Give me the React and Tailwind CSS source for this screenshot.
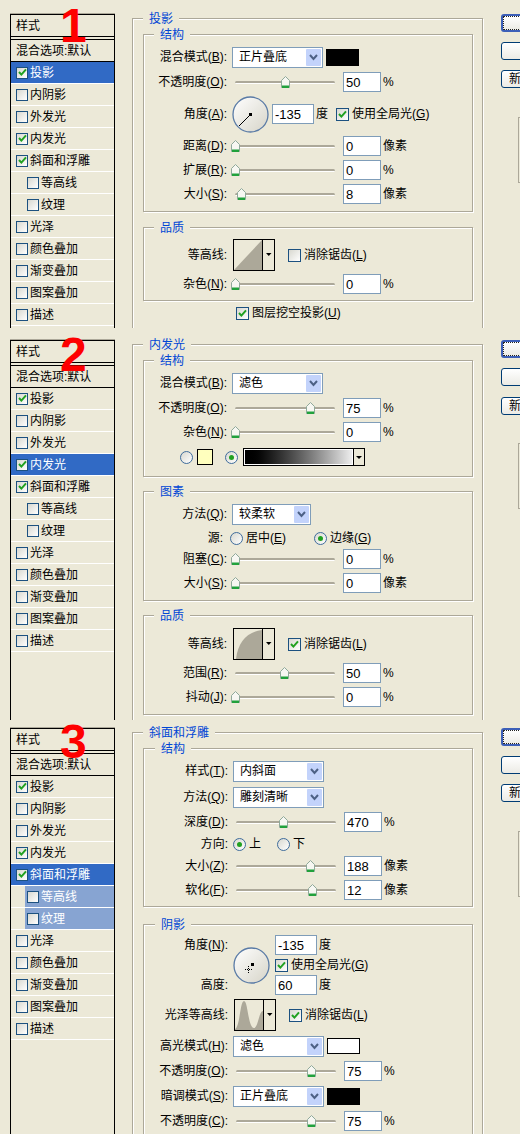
import React from "react";

const FONT = "font-['Liberation_Sans','Noto_Sans_CJK_SC',sans-serif]";

function Check({ on, s = "h-[13px] w-[13px]" }) {
  return (
    <span className={`flex ${s} shrink-0 items-center justify-center border border-[#1c5180] bg-gradient-to-br from-[#d8d8d0] to-white`}>
      {on && (
        <svg width="9" height="9" viewBox="0 0 9 9">
          <path d="M1 4 L3.4 6.6 L8 1.4" fill="none" stroke="#21a121" strokeWidth="2" />
        </svg>
      )}
    </span>
  );
}

function Radio({ on }) {
  return (
    <span className="flex h-[13px] w-[13px] shrink-0 items-center justify-center rounded-full border border-[#3f6c9c] bg-gradient-to-br from-[#d8d8d0] to-white">
      {on && <span className="h-[5px] w-[5px] rounded-full bg-[#21a121]" />}
    </span>
  );
}

function L({ t, k }) {
  if (!k) return <>{t}</>;
  return (
    <>
      {t}(<u>{k}</u>)
    </>
  );
}

function Label({ t, k, w = "w-[83px]" }) {
  return (
    <span className={`${w} shrink-0 whitespace-nowrap text-right`}>
      <L t={t} k={k} />:
    </span>
  );
}

function Input({ v, w = "w-[38px]" }) {
  return (
    <span className={`${w} flex h-[20px] shrink-0 items-center border border-[#7f9db9] bg-white pl-[2px] text-[13px]`}>
      {v}
    </span>
  );
}

function Select({ v, w = "w-[91px]" }) {
  return (
    <span className={`${w} ml-[5px] flex h-[21px] shrink-0 items-center justify-between border border-[#7f9db9] bg-white p-px pl-[6px]`}>
      <span className="whitespace-nowrap">{v}</span>
      <span className="flex h-full w-[15px] items-center justify-center rounded-[1px] bg-[#c3d3fb]">
        <svg width="9" height="7" viewBox="0 0 9 7">
          <path d="M1 1 L4.5 5 L8 1" fill="none" stroke="#4d6185" strokeWidth="2" />
        </svg>
      </span>
    </span>
  );
}

function Thumb() {
  return (
    <svg width="9" height="12" viewBox="0 0 9 12" className="block">
      <path d="M4.5 .5 L8.5 4.5 V11.5 H.5 V4.5 Z" fill="#f7f7f2" stroke="#8fa99a" />
      <rect x="1" y="9.5" width="7" height="2.5" fill="#21a13c" />
    </svg>
  );
}

function Slider({ pos }) {
  return (
    <span className="relative ml-[8px] mr-[8px] block h-[3px] w-[100px] shrink-0 rounded-[2px] border-b border-b-white bg-[#aca899]">
      <span className="absolute top-[-5px] block" style={{ left: pos - 5 }}>
        <Thumb />
      </span>
    </span>
  );
}

function SRow({ t, k, pos, v, u, cls = "" }) {
  return (
    <div className={`flex h-[24px] items-center ${cls}`}>
      <Label t={t} k={k} />
      <Slider pos={pos} />
      <Input v={v} />
      <span className="ml-[2px]">{u}</span>
    </div>
  );
}

function SelRow({ t, k, v, w, swatch, cls = "" }) {
  return (
    <div className={`flex h-[24px] items-center ${cls}`}>
      <Label t={t} k={k} />
      <Select v={v} w={w} />
      {swatch === "black" && <span className="ml-[3px] h-[17px] w-[33px] bg-black" />}
      {swatch === "whiteb" && <span className="ml-[3px] h-[16px] w-[33px] border border-black bg-white" />}
    </div>
  );
}

function Contour({ shape }) {
  const paths = {
    line: "M1 31 L29 1 V31 Z",
    curve: "M3 31 C5 14 14 4 29 2 V31 Z",
    wave: "M1 30 C6 28 6 2 10 2 C14 2 14 29 20 29 C24 29 25 12 29 12 V31 H1 Z",
  };
  return (
    <svg width="42" height="32" viewBox="0 0 42 32" className="ml-[6px] shrink-0">
      <rect x=".5" y=".5" width="41" height="31" fill="#ece9d8" stroke="#000" />
      <path d={paths[shape]} fill="#aca899" />
      <line x1="29.5" y1="1" x2="29.5" y2="31" stroke="#000" />
      <path d="M33 14 H38.5 L35.75 17 Z" fill="#000" />
    </svg>
  );
}

function ContourRow({ t, shape, on, cls = "" }) {
  return (
    <div className={`flex h-[32px] items-center ${cls}`}>
      <Label t={t} />
      <Contour shape={shape} />
      <span className="ml-[13px]">
        <Check on={on} />
      </span>
      <span className="ml-[3px]">
        <L t="消除锯齿" k="L" />
      </span>
    </div>
  );
}

function Dial({ small }) {
  return (
    <svg width="37" height="37" viewBox="0 0 37 37" className="shrink-0">
      <defs>
        <linearGradient id="dg" x1="0" y1="0" x2="1" y2="1">
          <stop offset="0" stopColor="#ffffff" />
          <stop offset="1" stopColor="#d6d4c8" />
        </linearGradient>
      </defs>
      <circle cx="18.5" cy="18.5" r="17.5" fill="url(#dg)" stroke="#5a7ba6" strokeWidth="1.3" />
      {small ? (
        <>
          <rect x="18" y="16" width="3" height="3" fill="#000" />
          <path d="M12 22.5 H19 M15.5 19 V26" stroke="#000" strokeWidth="1" strokeDasharray="1 1" />
        </>
      ) : (
        <>
          <rect x="17" y="17" width="3" height="3" fill="#000" />
          <path d="M18 19 L7 30" stroke="#000" strokeWidth="1" />
        </>
      )}
    </svg>
  );
}

function Group({ title, cls = "", children }) {
  return (
    <fieldset className={`min-w-0 border border-[#aca899] shadow-[1px_1px_0_#fff,inset_1px_1px_0_#fff] ${cls}`}>
      <legend className="ml-[10px] h-[14px] bg-[#ece9d8] px-[6px] text-[12px] leading-[16px] text-[#0046d5]">{title}</legend>
      {children}
    </fieldset>
  );
}

const ROWS = [
  ["投影", 0],
  ["内阴影", 0],
  ["外发光", 0],
  ["内发光", 0],
  ["斜面和浮雕", 0],
  ["等高线", 1],
  ["纹理", 1],
  ["光泽", 0],
  ["颜色叠加", 0],
  ["渐变叠加", 0],
  ["图案叠加", 0],
  ["描述", 0],
];
const CHECKED = ["投影", "内发光", "斜面和浮雕"];

function StyleList({ active, mt, subActive }) {
  return (
    <div className={`${mt} w-[105px] shrink-0 self-stretch border-x border-t border-x-black border-t-black shadow-[0_-1px_0_#aca899]`}>
      <div className="flex h-[22px] items-center border-b border-black pl-[5px]">样式</div>
      <div className="mt-[2px] flex h-[23px] items-center border-y border-black pl-[5px]">混合选项:默认</div>
      {ROWS.map(([name, sub]) => {
        const sel = name === active;
        const tint = subActive && sub === 1;
        return (
          <div key={name} className={`flex h-[22px] items-stretch border-b border-b-white ${sub ? "pl-[14px]" : "pl-[5px]"} ${sel ? "bg-[#316ac5] text-white" : ""}`}>
            <div className={`flex flex-1 items-center gap-[2px] ${sub ? "pl-[2px]" : ""} ${tint ? "bg-[#87a4d2] text-white" : ""}`}>
              <Check on={CHECKED.includes(name)} s="h-[12px] w-[12px]" />
              <span className="whitespace-nowrap">{name}</span>
            </div>
          </div>
        );
      })}
    </div>
  );
}

function Buttons({ mt, gap3, pmt }) {
  return (
    <div className={`${mt} ml-[18px] w-[19px] shrink-0 overflow-hidden`}>
      <div className="h-[18px] w-[80px] rounded-[3px] border-2 border-[#3c5fb8] bg-gradient-to-b from-white to-[#ecebe5] outline-1 -outline-offset-3 outline-dotted outline-[#222]" />
      <div className="mt-[10px] h-[18px] w-[80px] rounded-[3px] border border-[#003c74] bg-gradient-to-b from-white to-[#ecebe5]" />
      <div className={`${gap3} flex h-[18px] w-[80px] items-center rounded-[3px] border border-[#003c74] bg-gradient-to-b from-white to-[#ecebe5] pl-[7px]`}>
        新建样式
      </div>
      <div className={`${pmt} ml-[17px] h-[66px] w-[10px] border border-[#aca899]`} />
    </div>
  );
}

function Num({ n, top }) {
  return (
    <span className={`absolute left-[60px] ${top} font-['Liberation_Sans',sans-serif] text-[48px] font-bold leading-none text-[#fe0000]`}>
      {n}
    </span>
  );
}

function Panel({ h, children }) {
  return <div className={`relative flex ${h} overflow-hidden pl-[10px]`}>{children}</div>;
}

function Section1() {
  return (
    <Panel h="h-[328px]">
      <StyleList active="投影" mt="mt-[14px]" />
      <div className="ml-[17px] mt-[11px] w-[351px] shrink-0">
        <Group title="投影" cls="h-[317px] border-b-0 shadow-[1px_0_0_#fff,inset_1px_1px_0_#fff]">
          <div className="ml-[10px] mt-[2px] w-[330px]">
            <Group title="结构" cls="pb-[5px] pt-[4px]">
              <SelRow t="混合模式" k="B" v="正片叠底" swatch="black" />
              <SRow t="不透明度" k="O" pos={51} v="50" u="%" cls="mt-[1px]" />
              <div className="flex h-[40px] items-center">
                <Label t="角度" k="A" />
                <span className="ml-[5px]">
                  <Dial />
                </span>
                <span className="ml-[3px]">
                  <Input v="-135" w="w-[42px]" />
                </span>
                <span className="ml-[2px]">度</span>
                <span className="ml-[8px]">
                  <Check on />
                </span>
                <span className="ml-[3px] whitespace-nowrap">
                  <L t="使用全局光" k="G" />
                </span>
              </div>
              <SRow t="距离" k="D" pos={1} v="0" u="像素" />
              <SRow t="扩展" k="R" pos={1} v="0" u="%" />
              <SRow t="大小" k="S" pos={7} v="8" u="像素" />
            </Group>
            <Group title="品质" cls="mt-[8px] pb-[4px] pt-[5px]">
              <ContourRow t="等高线" shape="line" />
              <SRow t="杂色" k="N" pos={1} v="0" u="%" cls="mt-[1px]" />
            </Group>
          </div>
          <div className="ml-[103px] flex h-[24px] items-center gap-[3px]">
            <Check on />
            <span className="whitespace-nowrap">
              <L t="图层挖空投影" k="U" />
            </span>
          </div>
        </Group>
      </div>
      <Buttons mt="mt-[14px]" gap3="mt-[10px]" pmt="mt-[29px]" />
      <Num n="1" top="top-[2px]" />
    </Panel>
  );
}

function Section2() {
  return (
    <Panel h="h-[392px]">
      <StyleList active="内发光" mt="mt-[12px]" />
      <div className="ml-[17px] mt-[9px] w-[351px] shrink-0">
        <Group title="内发光" cls="h-[383px] border-b-0 shadow-[1px_0_0_#fff,inset_1px_1px_0_#fff]">
          <div className="ml-[10px] mt-[2px] w-[330px]">
            <Group title="结构" cls="pb-[7px] pt-[4px]">
              <SelRow t="混合模式" k="B" v="滤色" />
              <SRow t="不透明度" k="O" pos={76} v="75" u="%" cls="mt-[1px]" />
              <SRow t="杂色" k="N" pos={1} v="0" u="%" />
              <div className="mt-[1px] flex h-[24px] items-center pl-[36px]">
                <Radio />
                <span className="ml-[4px] h-[16px] w-[16px] border border-black bg-[#ffffbe]" />
                <span className="ml-[12px]">
                  <Radio on />
                </span>
                <span className="ml-[5px] flex h-[18px] w-[122px] border border-black bg-white">
                  <span className="m-px flex-1 bg-gradient-to-r from-black to-[#eeeeee]" />
                  <span className="flex w-[11px] items-center justify-center border-l border-black bg-[#ece9d8]">
                    <svg width="6" height="3" viewBox="0 0 6 3">
                      <path d="M0 0 H6 L3 3 Z" fill="#000" />
                    </svg>
                  </span>
                </span>
              </div>
            </Group>
            <Group title="图素" cls="mt-[7px] pb-[5px] pt-[4px]">
              <SelRow t="方法" k="Q" v="较柔软" w="w-[79px]" />
              <div className="mt-[2px] flex h-[20px] items-center">
                <Label t="源" w="w-[79px]" />
                <span className="ml-[7px]">
                  <Radio />
                </span>
                <span className="ml-[3px] w-[68px] whitespace-nowrap">
                  <L t="居中" k="E" />
                </span>
                <Radio on />
                <span className="ml-[3px] whitespace-nowrap">
                  <L t="边缘" k="G" />
                </span>
              </div>
              <SRow t="阻塞" k="C" pos={1} v="0" u="%" cls="-mt-px" />
              <SRow t="大小" k="S" pos={1} v="0" u="像素" />
            </Group>
            <Group title="品质" cls="mt-[7px] pb-[5px] pt-[6px]">
              <ContourRow t="等高线" shape="curve" on />
              <SRow t="范围" k="R" pos={50} v="50" u="%" cls="mt-[1px]" />
              <SRow t="抖动" k="J" pos={1} v="0" u="%" />
            </Group>
          </div>
        </Group>
      </div>
      <Buttons mt="mt-[12px]" gap3="mt-[11px]" pmt="mt-[28px]" />
      <Num n="2" top="top-[3px]" />
    </Panel>
  );
}

function Section3() {
  return (
    <Panel h="h-[414px]">
      <StyleList active="斜面和浮雕" mt="mt-[8px]" subActive />
      <div className="ml-[17px] mt-[5px] w-[351px] shrink-0">
        <Group title="斜面和浮雕" cls="h-[420px] border-b-0 shadow-[1px_0_0_#fff,inset_1px_1px_0_#fff]">
          <div className="ml-[10px] mt-[2px] w-[330px]">
            <Group title="结构" cls="pb-[4px] pl-px pt-[4px]">
              <SelRow t="样式" k="T" v="内斜面" />
              <SelRow t="方法" k="Q" v="雕刻清晰" cls="mt-[2px]" />
              <SRow t="深度" k="D" pos={48} v="470" u="%" cls="mt-[1px]" />
              <div className="flex h-[20px] items-center">
                <Label t="方向" />
                <span className="ml-[5px]">
                  <Radio on />
                </span>
                <span className="ml-[3px] w-[28px]">上</span>
                <Radio />
                <span className="ml-[3px]">下</span>
              </div>
              <SRow t="大小" k="Z" pos={75} v="188" u="像素" cls="h-[23px]" />
              <SRow t="软化" k="F" pos={77} v="12" u="像素" />
            </Group>
            <Group title="阴影" cls="mt-[10px] h-[240px] border-b-0 pl-px pt-[4px]">
              <div className="flex h-[60px]">
                <div className="flex w-[83px] shrink-0 flex-col justify-between py-[4px]">
                  <Label t="角度" k="N" />
                  <Label t="高度" />
                </div>
                <span className="ml-[5px] mt-[12px]">
                  <Dial small />
                </span>
                <div className="ml-[5px]">
                  <div className="flex h-[20px] items-center">
                    <Input v="-135" w="w-[42px]" />
                    <span className="ml-[2px]">度</span>
                  </div>
                  <div className="flex h-[20px] items-center gap-[3px]">
                    <Check on />
                    <span className="whitespace-nowrap">
                      <L t="使用全局光" k="G" />
                    </span>
                  </div>
                  <div className="flex h-[20px] items-center">
                    <Input v="60" w="w-[42px]" />
                    <span className="ml-[2px]">度</span>
                  </div>
                </div>
              </div>
              <ContourRow t="光泽等高线" shape="wave" on cls="mt-[4px]" />
              <SelRow t="高光模式" k="H" v="滤色" swatch="whiteb" cls="mt-[3px]" />
              <SRow t="不透明度" k="O" pos={76} v="75" u="%" cls="mt-[1px]" />
              <SelRow t="暗调模式" k="S" v="正片叠底" swatch="black" cls="mt-[1px]" />
              <SRow t="不透明度" k="C" pos={76} v="75" u="%" cls="mt-[1px]" />
            </Group>
          </div>
        </Group>
      </div>
      <Buttons mt="mt-[8px]" gap3="mt-[10px]" pmt="mt-[29px]" />
      <Num n="3" top="top-[-2px]" />
    </Panel>
  );
}

export default function App() {
  return (
    <div className={`${FONT} h-[1134px] w-[520px] overflow-hidden bg-[#ece9d8] text-[12px] leading-none text-black`}>
      <Section1 />
      <Section2 />
      <Section3 />
    </div>
  );
}
